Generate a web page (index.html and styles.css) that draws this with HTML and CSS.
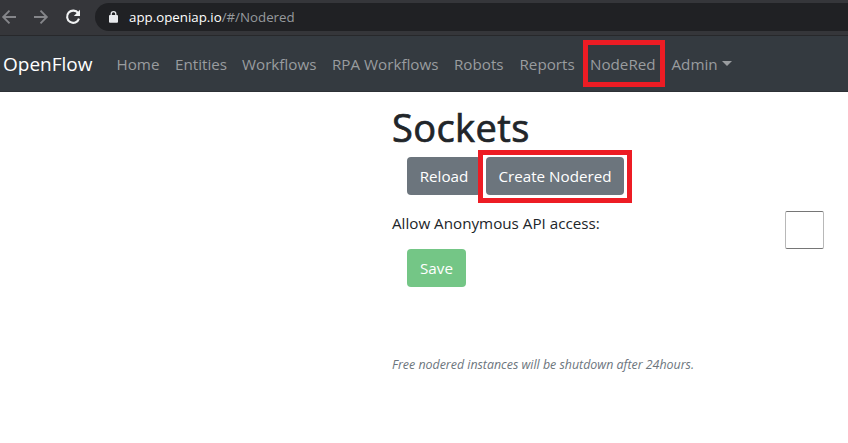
FILE: index.html
```
<!DOCTYPE html>
<html lang="en">
<head>
<meta charset="utf-8">
<title>OpenFlow</title>
<link rel="stylesheet" href="styles.css">
</head>
<body>
<header class="browser">
  <svg class="arrow" width="16" height="16" viewBox="0 0 16 16"><path d="M15 8H2.5M8.5 1.7 2.2 8 8.5 14.3"/></svg>
  <svg class="arrow forward" width="16" height="16" viewBox="0 0 16 16"><path d="M1 8H13.5M7.5 1.7 13.8 8 7.5 14.3"/></svg>
  <svg class="reload" width="16" height="16" viewBox="0 0 16 16"><path class="ring" d="M13.2 4.2A6.1 6.1 0 1 0 14 9.6"/><path class="tip" d="M15 .8V7H8.8z"/></svg>
  <div class="address">
    <svg class="lock" width="9" height="12" viewBox="0 0 9 12"><path class="shackle" d="M2.2 5V3a2.3 2.3 0 0 1 4.6 0v2"/><rect y="4" width="9" height="7.7" rx="1"/></svg>
    <span class="url"><b>app.openiap.io</b>/#/Nodered</span>
  </div>
</header>
<nav class="navbar">
  <a class="brand">OpenFlow</a>
  <a class="home">Home</a>
  <a class="entities">Entities</a>
  <a class="workflows">Workflows</a>
  <a class="rpa">RPA Workflows</a>
  <a class="robots">Robots</a>
  <a class="reports">Reports</a>
  <a class="nodered">NodeRed</a>
  <a class="admin">Admin<i class="caret"></i></a>
</nav>
<main class="content">
  <h1>Sockets</h1>
  <div class="actions">
    <button class="btn reload-btn">Reload</button>
    <div class="marked"><button class="btn create-btn">Create Nodered</button></div>
  </div>
  <div class="setting">
    <label for="anon">Allow Anonymous API access:</label>
    <input id="anon" type="checkbox">
  </div>
  <button class="btn save-btn">Save</button>
  <p class="note">Free nodered instances will be shutdown after 24hours.</p>
</main>
</body>
</html>
```
FILE: styles.css
```
*, *::after { box-sizing: border-box; }
body {
  margin: 0;
  height: 443px;
  overflow: hidden;
  background: #fff;
  color: #212529;
  font: 15.2px/24px "Open Sans", "Noto Sans", sans-serif;
}
.browser {
  display: flex;
  align-items: center;
  height: 36px;
  padding: 0 0 2px 1px;
  background: #35363a;
  border-bottom: 1px solid #27282b;
}
.browser svg { flex: none; }
.arrow { fill: none; stroke: #85868a; stroke-width: 1.9; }
.forward { margin-left: 16px; }
.reload { margin-left: 16px; }
.ring { fill: none; stroke: #f1f3f4; stroke-width: 2.1; }
.tip { fill: #f1f3f4; }
.address {
  display: flex;
  align-items: center;
  flex: 1;
  height: 28px;
  margin-left: 14px;
  padding-left: 14px;
  border-radius: 14px 0 0 14px;
  background: #202124;
}
.lock { fill: #e8eaed; }
.shackle { fill: none; stroke: #e8eaed; stroke-width: 1.3; }
.url { margin-left: 11px; color: #96999d; font-size: 13.3px; white-space: nowrap; }
.url b { font-weight: 400; color: #fff; }
.navbar {
  display: flex;
  align-items: center;
  height: 56px;
  padding: 1px 0 0 3px;
  background: #343a40;
  border-bottom: 1px solid #2d3136;
  color: #999c9f;
  white-space: nowrap;
}
.navbar a { flex: none; }
.brand { width: 113.5px; color: #fff; font-size: 19px; line-height: 30px; }
.home { width: 58.5px; }
.entities { width: 67px; }
.workflows { width: 90px; }
.rpa { width: 122px; }
.robots { width: 65.5px; }
.reports { width: 70.5px; }
.nodered { position: relative; width: 81.5px; }
.nodered::after {
  content: "";
  position: absolute;
  left: -7px;
  top: -12px;
  width: 82px;
  height: 47px;
  border: 5px solid #ed1c24;
}
.caret {
  display: inline-block;
  margin-left: 4px;
  vertical-align: 4px;
  border: 5px solid transparent;
  border-top-color: currentColor;
  border-bottom: 0;
}
.content { width: 432px; margin-left: 392px; padding-top: 11px; }
h1 {
  margin: 0;
  font-size: 38px;
  font-weight: 500;
  line-height: 48px;
  letter-spacing: 0.4px;
  -webkit-text-stroke: 0.7px currentColor;
}
.actions { display: flex; margin: 6px 0 0 15px; }
.btn {
  height: 38px;
  padding: 0;
  border: 0;
  border-radius: 4px;
  background: #6c757d;
  color: #fff;
  font: inherit;
  white-space: nowrap;
}
.reload-btn { width: 74px; }
.marked { position: relative; margin-left: 5px; }
.marked::after {
  content: "";
  position: absolute;
  left: -8px;
  top: -7px;
  width: 154px;
  height: 53px;
  border: 5px solid #ed1c24;
}
.create-btn { width: 138px; }
.setting { display: flex; justify-content: space-between; margin-top: 16px; }
.setting input {
  appearance: none;
  width: 39px;
  height: 38px;
  margin: 0;
  border: 1px solid #767676;
  border-color: #767676 #b8b8b8;
  border-radius: 2px;
  background: #fff;
}
.save-btn { display: block; width: 59px; margin-left: 15px; background: #74c686; }
.note { margin: 66px 0 0; color: #6c757d; font-size: 12.4px; font-style: italic; white-space: nowrap; }
```
